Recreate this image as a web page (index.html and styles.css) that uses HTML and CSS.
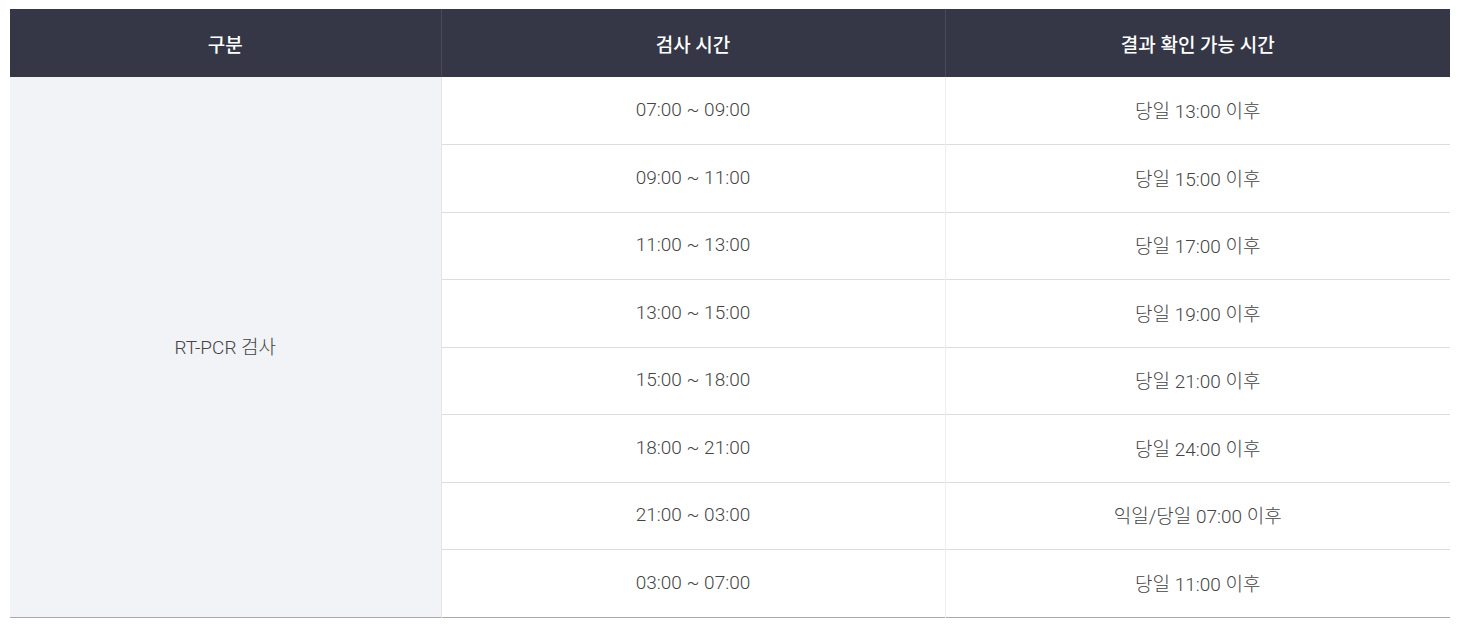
FILE: index.html
```html
<!DOCTYPE html>
<html lang="ko">
<head>
<meta charset="utf-8">
<link rel="stylesheet" href="styles.css">
</head>
<body>
<div class="wrap">
<table class="tbl">
  <colgroup>
    <col class="c1"><col class="c2"><col class="c3">
  </colgroup>
  <thead>
    <tr><th>구분</th><th>검사 시간</th><th>결과 확인 가능 시간</th></tr>
  </thead>
  <tbody>
    <tr><td class="cat" rowspan="8">RT-PCR 검사</td><td>07:00 ~ 09:00</td><td>당일 13:00 이후</td></tr>
    <tr><td>09:00 ~ 11:00</td><td>당일 15:00 이후</td></tr>
    <tr><td>11:00 ~ 13:00</td><td>당일 17:00 이후</td></tr>
    <tr><td>13:00 ~ 15:00</td><td>당일 19:00 이후</td></tr>
    <tr><td>15:00 ~ 18:00</td><td>당일 21:00 이후</td></tr>
    <tr><td>18:00 ~ 21:00</td><td>당일 24:00 이후</td></tr>
    <tr><td>21:00 ~ 03:00</td><td>익일/당일 07:00 이후</td></tr>
    <tr><td>03:00 ~ 07:00</td><td>당일 11:00 이후</td></tr>
  </tbody>
</table>
</div>
</body>
</html>
```
FILE: styles.css
```css
html, body {
  margin: 0;
  padding: 0;
  background: #fff;
}
.wrap {
  padding: 9px 15px 0 10px;
}
.tbl {
  width: 1440px;
  border-collapse: collapse;
  table-layout: fixed;
  font-family: Roboto, "Noto Sans CJK KR", sans-serif;
  font-size: 19px;
  border-bottom: 1px solid #aaaaaa;
}
.c1 { width: 431px; }
.c2 { width: 504px; }
.c3 { width: 505px; }
.tbl th {
  height: 68px;
  padding: 0;
  background: #353746;
  color: #ffffff;
  font-weight: 500;
  font-size: 19px;
  text-align: center;
  vertical-align: middle;
  border-left: 1px solid #484a5a;
}
.tbl th:first-child { border-left: none; }
.tbl td {
  height: 67.5px;
  padding: 0 0 2px;
  box-sizing: border-box;
  text-align: center;
  vertical-align: middle;
  color: #444444;
  font-weight: 300;
  border-top: 1px solid #dddddd;
  border-left: 1px solid #eeeeee;
}
.tbl tbody tr:first-child td { border-top: none; }
.tbl td.cat {
  background: #f2f3f7;
  border-left: none;
  border-right: 1px solid #e6e6ea;
  font-weight: 300;
}
```
